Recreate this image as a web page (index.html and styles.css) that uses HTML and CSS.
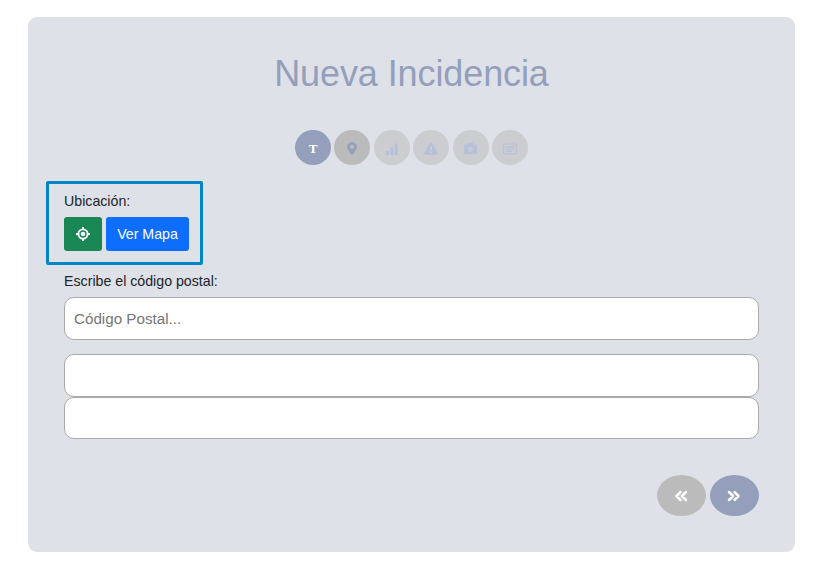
FILE: index.html
```html
<!DOCTYPE html>
<html lang="es">
<head>
<meta charset="utf-8">
<title>Nueva Incidencia</title>
<link rel="stylesheet" href="styles.css">
</head>
<body>
<main class="card">
  <h1 class="title">Nueva Incidencia</h1>
  <div class="steps">
    <span class="step done"><b class="step-letter">T</b></span>
    <span class="step current"><svg viewBox="0 0 384 512" width="10" height="13"><path d="M172 502C27 291 0 269 0 192a192 192 0 0 1 384 0c0 77-27 99-172 310a24 24 0 0 1-40 0zM192 272a80 80 0 1 0 0-160 80 80 0 0 0 0 160z"/></svg></span>
    <span class="step"><svg viewBox="0 0 12 12" width="12" height="12"><path d="M0 8h3v4H0zM4.300 4.500h3V12h-3zM8.600 0.500h3V12h-3z"/></svg></span>
    <span class="step"><svg viewBox="0 0 576 512" width="14" height="13"><path fill-rule="evenodd" d="M570 440c18 32-5 72-42 72H48c-37 0-60-40-42-72L246 24c19-32 65-32 84 0zM288 354a46 46 0 1 0 0 92 46 46 0 0 0 0-92zm-44-165 8 136c0 6 5 11 12 11h48c7 0 12-5 12-11l8-136c0-7-5-13-12-13h-64c-7 0-12 6-12 13z"/></svg></span>
    <span class="step"><svg viewBox="0 0 512 512" width="13" height="13"><path fill-rule="evenodd" d="M512 144v288c0 27-21 48-48 48H48c-27 0-48-21-48-48V144c0-27 21-48 48-48h88l12-33c7-19 25-31 45-31h126c20 0 38 12 45 31l12 33h88c27 0 48 21 48 48zM256 192a96 96 0 1 0 0 192 96 96 0 0 0 0-192z"/></svg></span>
    <span class="step"><svg class="outline" viewBox="0 0 14 12" width="14" height="12"><rect x=".75" y="1" width="12.500" height="9.800" rx="1.200"/><path d="M3 3.800h8M3 6h8M3 8.200h6"/></svg></span>
  </div>
  <section class="location">
    <div class="label">Ubicación:</div>
    <div class="buttons">
      <button class="btn locate" aria-label="Localizar"><svg viewBox="0 0 16 16" width="16" height="16"><circle cx="8" cy="8" r="4.600"/><path d="M8 1v3M8 12v3M1 8h3M12 8h3"/><circle class="dot" cx="8" cy="8" r="2.300"/></svg></button>
      <button class="btn map">Ver Mapa</button>
    </div>
  </section>
  <label class="label" for="cp">Escribe el código postal:</label>
  <input class="field postal" id="cp" placeholder="Código Postal...">
  <input class="field" aria-label="Provincia">
  <input class="field last" aria-label="Municipio">
  <div class="nav">
    <button class="round prev" aria-label="Anterior"><svg viewBox="0 0 14 12" width="14" height="12"><path d="M6.500 2 2.500 6l4 4M12 2 8 6l4 4"/></svg></button>
    <button class="round next" aria-label="Siguiente"><svg viewBox="0 0 14 12" width="14" height="12"><path d="M2 2l4 4-4 4M7.500 2l4 4-4 4"/></svg></button>
  </div>
</main>
</body>
</html>
```
FILE: styles.css
```css
* { box-sizing: border-box; }
body {
  margin: 0;
  padding: 17px 27px 0 28px;
  background: #fff;
  color: #212529;
  font-family: "Liberation Sans", Arial, sans-serif;
}
.card {
  height: 535px;
  padding: 36px 36px 0;
  border-radius: 9px;
  background: #dee1e8;
}
.title {
  margin: 0;
  height: 42px;
  line-height: 42px;
  font-size: 36px;
  font-weight: 400;
  letter-spacing: -.1px;
  text-align: center;
  color: #939fbb;
}
.steps {
  display: flex;
  justify-content: center;
  gap: 3.4px;
  margin-top: 35px;
}
.step {
  display: flex;
  align-items: center;
  justify-content: center;
  width: 36px;
  height: 35px;
  padding-top: 2px;
  border-radius: 50%;
  background: #bbb;
  opacity: .5;
}
.step svg { fill: #939fbb; }
.step:nth-child(n+3) svg { fill: #8fa3cc; }
.step svg.outline, .step:nth-child(n+3) svg.outline { fill: none; stroke: #8fa3cc; stroke-width: 1.2; }
.done, .current { opacity: 1; }
.done { background: #939fbb; }
.step-letter { font: bold 13px "Liberation Serif", serif; color: #fff; }
.location {
  width: 157px;
  height: 84px;
  margin: 16px 0 0 -18px;
  padding: 9px 0 0 15px;
  border: 3px solid #0086c4;
  border-radius: 2px;
}
.label {
  display: block;
  height: 16px;
  line-height: 16px;
  font-size: 14.2px;
}
.buttons { display: flex; gap: 4px; margin-top: 8px; }
.btn {
  display: flex;
  align-items: center;
  justify-content: center;
  height: 34px;
  padding: 0;
  border: 0;
  border-radius: 3px;
  color: #fff;
  font: 14.2px "Liberation Sans", Arial, sans-serif;
}
.locate { width: 38px; background: #198754; }
.locate svg { fill: none; stroke: #fff; stroke-width: 1.9; }
.locate .dot { fill: #fff; stroke: none; }
.map { width: 83px; background: #0d6efd; }
.location + .label { margin-top: 8px; }
.field {
  display: block;
  width: 100%;
  height: 43px;
  padding: 0 9px;
  border: 1px solid #aaa;
  border-radius: 10px;
  background: #fff;
  font: 15.2px "Liberation Sans", Arial, sans-serif;
}
.field::placeholder { color: #757575; opacity: 1; }
.postal { margin: 8px 0 14px; }
.last { height: 42px; }
.nav { display: flex; justify-content: flex-end; gap: 4px; margin-top: 36px; }
.round {
  display: flex;
  align-items: center;
  justify-content: center;
  width: 49px;
  height: 41px;
  padding: 0;
  border: 0;
  border-radius: 50%;
}
.round svg { fill: none; stroke: #fff; stroke-width: 2.5; stroke-linecap: round; stroke-linejoin: round; margin-right: 1px; }
.prev { background: #bbb; }
.next { background: #939fbb; }
```
